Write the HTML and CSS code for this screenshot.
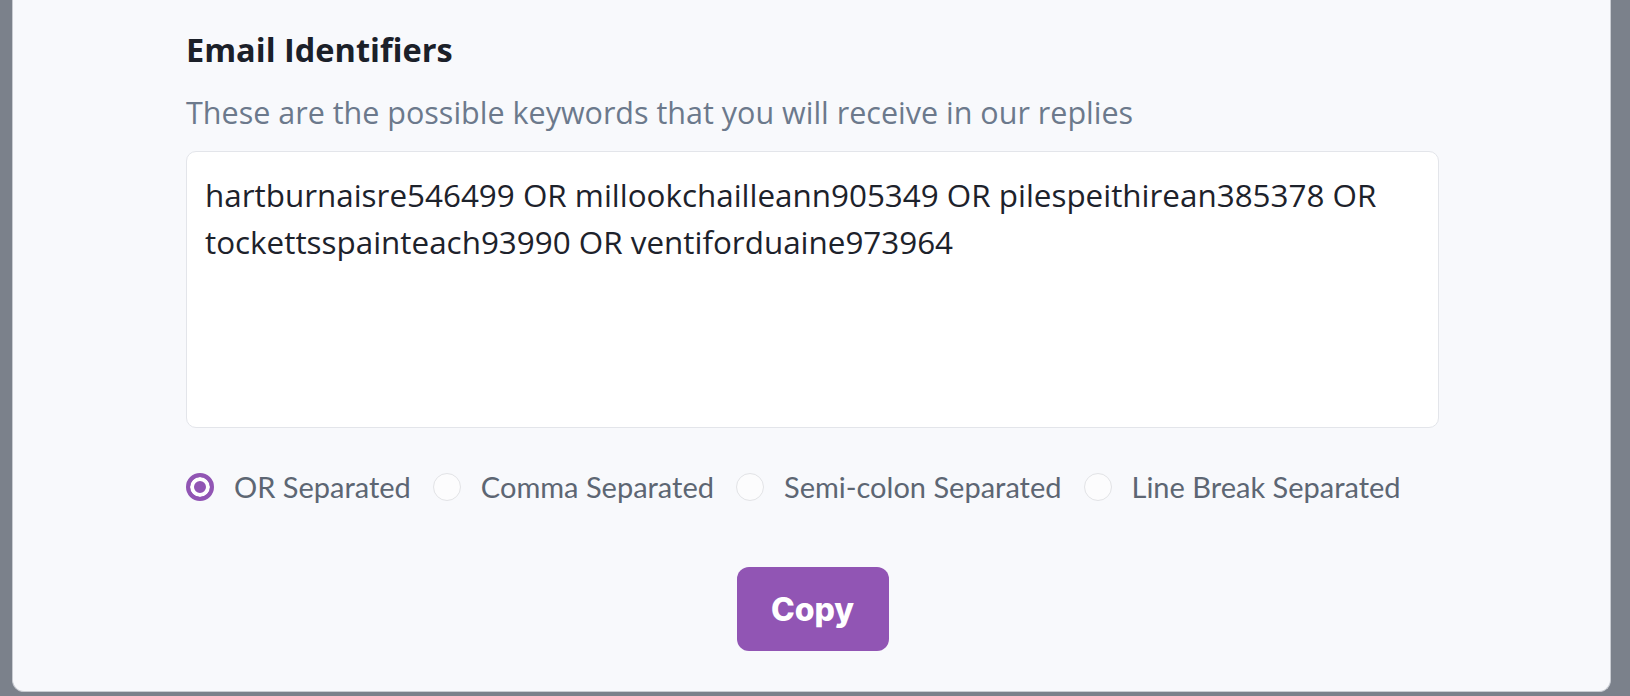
FILE: index.html
```html
<!DOCTYPE html>
<html lang="en">
<head>
    <meta charset="UTF-8">
    <meta name="viewport" content="width=device-width, initial-scale=1.0">
    <title>Email Identifiers</title>
    <link rel="stylesheet" href="styles.css">
</head>
<body>
    <div class="panel">
        <section class="identifiers">
            <h2 class="title">Email Identifiers</h2>
            <p class="hint">These are the possible keywords that you will receive in our replies</p>

            <!-- Keyword list -->
            <textarea class="keywords" readonly>hartburnaisre546499 OR millookchailleann905349 OR pilespeithirean385378 OR tockettsspainteach93990 OR ventiforduaine973964</textarea>

            <!-- Separator choice -->
            <div class="separators">
                <label class="option">
                    <input type="radio" name="separator" value="or" checked>
                    <span>OR Separated</span>
                </label>
                <label class="option">
                    <input type="radio" name="separator" value="comma">
                    <span>Comma Separated</span>
                </label>
                <label class="option">
                    <input type="radio" name="separator" value="semicolon">
                    <span>Semi-colon Separated</span>
                </label>
                <label class="option">
                    <input type="radio" name="separator" value="linebreak">
                    <span>Line Break Separated</span>
                </label>
            </div>

            <div class="actions">
                <button class="copy-btn" type="button">Copy</button>
            </div>
        </section>
    </div>
</body>
</html>
```

FILE: styles.css
```css
html, body {
    height: 100%;
}
body {
    margin: 0;
    padding: 0;
    background-color: #7b818b;
    font-family: "Open Sans", "Noto Sans", sans-serif;
    overflow: hidden;
}
.panel {
    box-sizing: border-box;
    width: 1599px;
    height: 692px;
    margin-left: 12px;
    background-color: #f8f9fc;
    border: 1px solid #c9ccd2;
    border-top: none;
    border-radius: 0 0 12px 12px;
}
.identifiers {
    padding: 28px 0 0 173px;
    width: 1253px;
}
.title {
    margin: 0;
    font-size: 32.5px;
    font-weight: 700;
    color: #1b2029;
    line-height: 44px;
}
.hint {
    margin: 20px 0 19px;
    font-size: 30.5px;
    line-height: 40px;
    color: #6c798c;
}
.keywords {
    display: block;
    box-sizing: border-box;
    width: 1253px;
    height: 277px;
    margin: 0;
    padding: 19px 18px;
    background-color: #fff;
    border: 1px solid #e3e5ea;
    border-radius: 10px;
    font-family: "Open Sans", "Noto Sans", sans-serif;
    font-size: 31.4px;
    line-height: 47px;
    color: #1d222b;
    resize: none;
    outline: none;
}
.separators {
    display: flex;
    align-items: center;
    gap: 22px;
    margin-top: 41px;
}
.option {
    display: flex;
    align-items: center;
    gap: 20px;
    font-family: "Lato", "Noto Sans", sans-serif;
    font-size: 29px;
    line-height: 36px;
    color: #5d6673;
    cursor: pointer;
}
.option input {
    appearance: none;
    box-sizing: border-box;
    width: 28px;
    height: 28px;
    margin: 0;
    border: 1px solid #e2e3e6;
    border-radius: 50%;
    background-color: #fcfcfd;
}
.option input:checked {
    border: 4px solid #9155b4;
    background-color: #9155b4;
    box-shadow: inset 0 0 0 4px #fff;
}
.actions {
    display: flex;
    justify-content: center;
    margin-top: 62px;
}
.copy-btn {
    width: 152px;
    height: 84px;
    border: none;
    border-radius: 12px;
    background-color: #9155b4;
    color: #fff;
    font-family: "Inter", "Liberation Sans", sans-serif;
    font-size: 32px;
    font-weight: 800;
    cursor: pointer;
}
```
